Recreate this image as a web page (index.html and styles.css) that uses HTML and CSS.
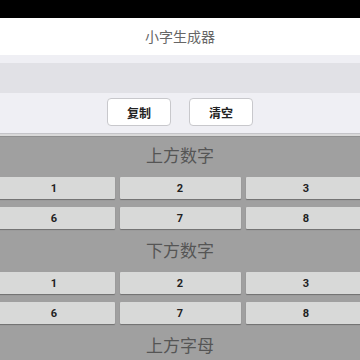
FILE: index.html
```html
<!DOCTYPE html>
<html lang="zh">
<head>
    <meta charset="UTF-8">
    <meta name="viewport" content="width=device-width, initial-scale=1.0">
    <title>小字生成器</title>
    <link rel="stylesheet" href="styles.css">
</head>
<body>

    <div class="statusbar"></div>

    <div class="header">小字生成器</div>

    <div class="panel">
        <div class="inputbar"></div>
        <div class="actions">
            <button type="button" class="action">复制</button>
            <button type="button" class="action">清空</button>
        </div>
    </div>

    <div class="keys">
        <div class="section">
            <div class="section-title">上方数字</div>
            <div class="row">
                <button type="button" class="key">0</button>
                <button type="button" class="key">1</button>
                <button type="button" class="key">2</button>
                <button type="button" class="key">3</button>
                <button type="button" class="key">4</button>
            </div>
            <div class="row">
                <button type="button" class="key">5</button>
                <button type="button" class="key">6</button>
                <button type="button" class="key">7</button>
                <button type="button" class="key">8</button>
                <button type="button" class="key">9</button>
            </div>
        </div>

        <div class="section">
            <div class="section-title">下方数字</div>
            <div class="row">
                <button type="button" class="key">0</button>
                <button type="button" class="key">1</button>
                <button type="button" class="key">2</button>
                <button type="button" class="key">3</button>
                <button type="button" class="key">4</button>
            </div>
            <div class="row">
                <button type="button" class="key">5</button>
                <button type="button" class="key">6</button>
                <button type="button" class="key">7</button>
                <button type="button" class="key">8</button>
                <button type="button" class="key">9</button>
            </div>
        </div>

        <div class="section">
            <div class="section-title">上方字母</div>
            <div class="row">
                <button type="button" class="key">a</button>
                <button type="button" class="key">b</button>
                <button type="button" class="key">c</button>
                <button type="button" class="key">d</button>
                <button type="button" class="key">e</button>
            </div>
        </div>
    </div>

</body>
</html>
```

FILE: styles.css
```css
html, body {
    margin: 0;
    height: 100%;
    overflow: hidden;
}

body {
    font-family: "Noto Sans CJK SC", "Noto Sans", sans-serif;
    background-color: #a0a0a0;
}

.statusbar {
    height: 18px;
    background-color: #000;
}

.header {
    height: 37px;
    line-height: 37px;
    background-color: #fff;
    text-align: center;
    font-size: 14px;
    color: #666;
}

.panel {
    background-color: #efeff4;
    padding-top: 8px;
    border-bottom: 1px solid #c4c4c8;
    box-shadow: 0 2px 0 #d9d9d9, 0 3px 0 #8f8f8f;
}

.inputbar {
    height: 30px;
    background-color: #e1e1e6;
}

.actions {
    display: flex;
    justify-content: center;
    gap: 18px;
    padding: 5px 0 7px;
    height: 28px;
}

.action {
    width: 64px;
    height: 28px;
    background-color: #fff;
    border: 1px solid #c8c8cc;
    border-radius: 4px;
    font-family: inherit;
    font-size: 12px;
    font-weight: bold;
    color: #222;
    padding: 0;
}

.section-title {
    height: 43px;
    line-height: 41px;
    text-align: center;
    font-size: 17px;
    color: #555;
}

.row {
    display: flex;
    justify-content: center;
    gap: 5px;
}

.row + .row {
    margin-top: 8px;
}

.key {
    flex: 0 0 121px;
    height: 22px;
    background-color: #d8d9d8;
    border: none;
    border-radius: 1px;
    box-shadow: 0 1px 1px rgba(0,0,0,0.3);
    font-family: Roboto, sans-serif;
    font-size: 11px;
    font-weight: bold;
    color: #222;
    padding: 0;
}
```
